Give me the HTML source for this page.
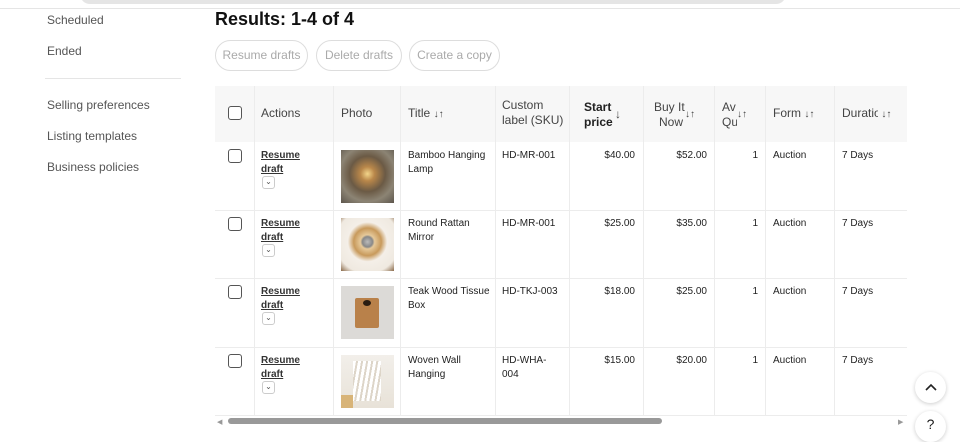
<!DOCTYPE html>
<html><head><meta charset="utf-8"><style>
*{box-sizing:border-box;margin:0;padding:0}
body{width:960px;height:424px;overflow:hidden;background:#fff;font-family:"Liberation Sans",Arial,sans-serif;color:#191919;position:relative}
.topbar{position:absolute;left:80px;top:-10px;width:706px;height:14px;background:#e5e5e5;border-radius:0 0 10px 10px}
.topline{position:absolute;left:0;top:8px;width:960px;height:1px;background:#e5e5e5}
.nav{position:absolute;left:47px;font-size:12px;color:#555}
.sep{position:absolute;left:45px;top:78px;width:136px;height:1px;background:#e5e5e5}
h1{position:absolute;left:215px;top:9px;font-size:18px;font-weight:bold;color:#111}
.btn{position:absolute;top:40px;height:31px;border:1px solid #ddd;border-radius:16px;font-size:12px;color:#aaa;line-height:29px;text-align:center}
.tbl{position:absolute;left:215px;top:86px;width:692px}
.hdr{position:absolute;left:0;top:0;width:692px;height:56px;background:#f7f7f7}
.vl{position:absolute;top:0;width:1px;height:329px;background:#ececec}
.hl{position:absolute;left:0;width:692px;height:1px;background:#ececec}
.t{position:absolute;font-size:10px;line-height:13.5px;color:#222}
.h{position:absolute;font-size:12px;color:#444;line-height:15px}
.cb{position:absolute;left:13px;width:14px;height:14px;border:1.3px solid #555;border-radius:3px;background:#fff}
.lnk{text-decoration:underline;font-weight:bold;color:#333}
.dd{position:absolute;width:13px;height:13px;border:1px solid #ccc;border-radius:3px;font-size:8px;text-align:center;line-height:10px;color:#555}
.ph{position:absolute;left:126px;width:53px;height:53px}
.r{text-align:right}
</style></head><body>
<div class="topbar"></div><div class="topline"></div>
<div class="nav" style="top:13px">Scheduled</div>
<div class="nav" style="top:44px">Ended</div>
<div class="sep"></div>
<div class="nav" style="top:98px">Selling preferences</div>
<div class="nav" style="top:129px">Listing templates</div>
<div class="nav" style="top:160px">Business policies</div>
<h1>Results: 1-4 of 4</h1>
<div class="btn" style="left:215px;width:93px">Resume drafts</div>
<div class="btn" style="left:316px;width:86px">Delete drafts</div>
<div class="btn" style="left:409px;width:91px">Create a copy</div>
<div class="tbl">
<div class="hdr"></div>
<div class="vl" style="left:39px"></div><div class="vl" style="left:118px"></div><div class="vl" style="left:185px"></div><div class="vl" style="left:280px"></div><div class="vl" style="left:354px"></div><div class="vl" style="left:428px"></div><div class="vl" style="left:499px"></div><div class="vl" style="left:550px"></div><div class="vl" style="left:619px"></div>
<div class="hl" style="top:124px"></div><div class="hl" style="top:192px"></div><div class="hl" style="top:261px"></div><div class="hl" style="top:329px"></div>
<div class="cb" style="top:20px"></div>
<div class="h" style="left:46px;top:20px">Actions</div>
<div class="h" style="left:126px;top:20px">Photo</div>
<div class="h" style="left:193px;top:20px">Title <span style="font-size:10px">↓↑</span></div>
<div class="h" style="left:287px;top:12px">Custom<br>label (SKU)</div>
<div class="h" style="left:369px;top:14px;font-weight:bold;color:#222">Start<br>price</div><div class="h" style="left:400px;top:21px">↓</div>
<div class="h" style="left:439px;top:14px;text-align:center">Buy It<br>&nbsp;Now</div><div class="h" style="left:470px;top:21px;font-size:10px">↓↑</div>
<div class="h" style="left:507px;top:14px;width:15px;overflow:hidden">Av<br>Qu</div><div class="h" style="left:522px;top:21px;font-size:10px">↓↑</div>
<div class="h" style="left:558px;top:20px">Form <span style="font-size:10px">↓↑</span></div>
<div class="h" style="left:627px;top:20px"><span style="display:inline-block;width:36px;overflow:hidden;vertical-align:top;white-space:nowrap">Duration</span> <span style="font-size:10px">↓↑</span></div>

<!-- rows -->
<div class="cb" style="top:63px"></div><div class="t lnk" style="left:46px;top:63px">Resume<br>draft</div><div class="dd" style="left:47px;top:90px">⌄</div>
<div class="ph" style="top:64px;background:radial-gradient(circle at 50% 45%,#f3d58a 0,#b9874a 18%,#6b5a45 45%,#8c8474 70%,#5d564c 100%)"></div>
<div class="t" style="left:193px;top:63px">Bamboo Hanging<br>Lamp</div><div class="t" style="left:287px;top:63px">HD-MR-001</div>
<div class="t r" style="left:360px;top:63px;width:60px">$40.00</div><div class="t r" style="left:430px;top:63px;width:62px">$52.00</div><div class="t r" style="left:510px;top:63px;width:33px">1</div>
<div class="t" style="left:558px;top:63px">Auction</div><div class="t" style="left:627px;top:63px">7 Days</div>

<div class="cb" style="top:131px"></div><div class="t lnk" style="left:46px;top:131px">Resume<br>draft</div><div class="dd" style="left:47px;top:158px">⌄</div>
<div class="ph" style="top:132px;background:radial-gradient(circle at 50% 45%,#bbb 0,#888 13%,#e6c99a 18%,#c89a5c 35%,#f4efe8 50%,#efe9e0 80%,#8a6a4a 100%)"></div>
<div class="t" style="left:193px;top:131px">Round Rattan<br>Mirror</div><div class="t" style="left:287px;top:131px">HD-MR-001</div>
<div class="t r" style="left:360px;top:131px;width:60px">$25.00</div><div class="t r" style="left:430px;top:131px;width:62px">$35.00</div><div class="t r" style="left:510px;top:131px;width:33px">1</div>
<div class="t" style="left:558px;top:131px">Auction</div><div class="t" style="left:627px;top:131px">7 Days</div>

<div class="cb" style="top:199px"></div><div class="t lnk" style="left:46px;top:199px">Resume<br>draft</div><div class="dd" style="left:47px;top:226px">⌄</div>
<div class="ph" style="top:200px;background:#dcdad7"><div style="position:absolute;left:14px;top:12px;width:24px;height:30px;background:#b9814a;border-radius:2px"></div><div style="position:absolute;left:22px;top:14px;width:8px;height:6px;background:#2a1d12;border-radius:50%"></div></div>
<div class="t" style="left:193px;top:199px">Teak Wood Tissue<br>Box</div><div class="t" style="left:287px;top:199px">HD-TKJ-003</div>
<div class="t r" style="left:360px;top:199px;width:60px">$18.00</div><div class="t r" style="left:430px;top:199px;width:62px">$25.00</div><div class="t r" style="left:510px;top:199px;width:33px">1</div>
<div class="t" style="left:558px;top:199px">Auction</div><div class="t" style="left:627px;top:199px">7 Days</div>

<div class="cb" style="top:268px"></div><div class="t lnk" style="left:46px;top:268px">Resume<br>draft</div><div class="dd" style="left:47px;top:295px">⌄</div>
<div class="ph" style="top:269px;background:linear-gradient(#f2efea,#e8e2d8)"><div style="position:absolute;left:12px;top:6px;width:28px;height:40px;background:repeating-linear-gradient(100deg,#fff 0 3px,#ddd5c8 3px 5px)"></div><div style="position:absolute;left:0;top:40px;width:12px;height:13px;background:#d8b478"></div></div>
<div class="t" style="left:193px;top:268px">Woven Wall<br>Hanging</div><div class="t" style="left:287px;top:268px">HD-WHA-<br>004</div>
<div class="t r" style="left:360px;top:268px;width:60px">$15.00</div><div class="t r" style="left:430px;top:268px;width:62px">$20.00</div><div class="t r" style="left:510px;top:268px;width:33px">1</div>
<div class="t" style="left:558px;top:268px">Auction</div><div class="t" style="left:627px;top:268px">7 Days</div>
</div>
<div style="position:absolute;left:217px;top:418px;font-size:7px;color:#999">◀</div>
<div style="position:absolute;left:228px;top:418px;width:434px;height:6px;background:#999;border-radius:3px"></div>
<div style="position:absolute;left:898px;top:418px;font-size:7px;color:#999">▶</div>
<div style="position:absolute;left:915px;top:372px;width:31px;height:31px;border-radius:50%;background:#fff;box-shadow:0 1px 4px rgba(0,0,0,.2);text-align:center"><svg width="14" height="10" style="margin-top:10px" viewBox="0 0 14 10"><path d="M2 8L7 3L12 8" fill="none" stroke="#222" stroke-width="1.6"/></svg></div>
<div style="position:absolute;left:915px;top:411px;width:31px;height:31px;border-radius:50%;background:#fff;box-shadow:0 1px 4px rgba(0,0,0,.2);text-align:center;font-size:14px;line-height:26px">?</div>
</body></html>
